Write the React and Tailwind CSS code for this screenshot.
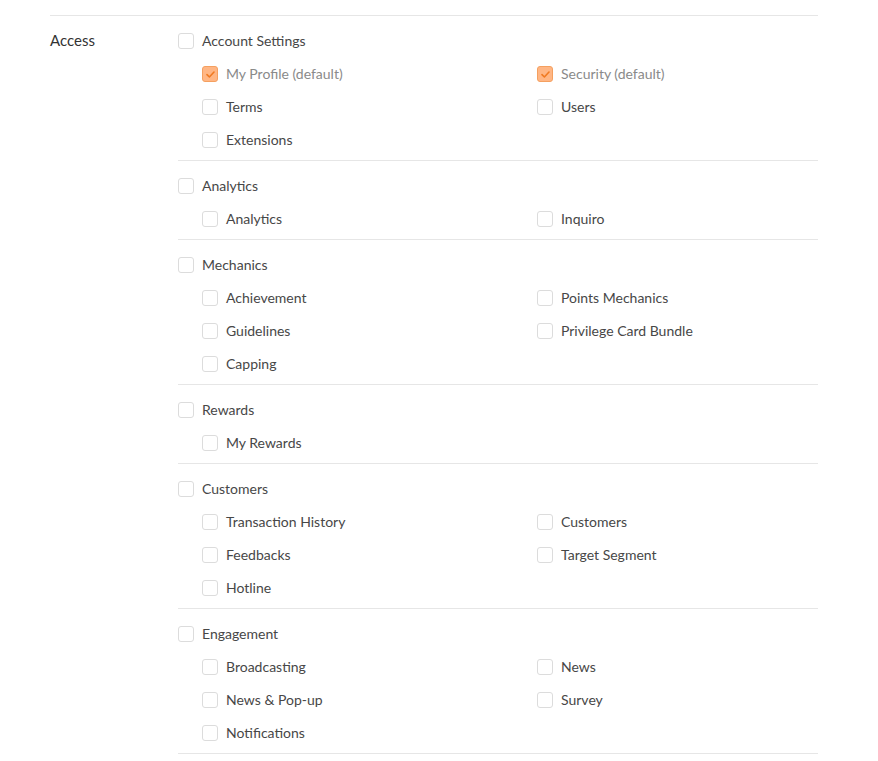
// Access permissions: grouped checkboxes, parent per module + two-column children.
const groups = [
  {
    name: 'Account Settings',
    items: [
      { label: 'My Profile (default)', checked: true },
      { label: 'Security (default)', checked: true },
      { label: 'Terms' },
      { label: 'Users' },
      { label: 'Extensions' },
    ],
  },
  { name: 'Analytics', items: [{ label: 'Analytics' }, { label: 'Inquiro' }] },
  {
    name: 'Mechanics',
    items: [
      { label: 'Achievement' },
      { label: 'Points Mechanics' },
      { label: 'Guidelines' },
      { label: 'Privilege Card Bundle' },
      { label: 'Capping' },
    ],
  },
  { name: 'Rewards', items: [{ label: 'My Rewards' }] },
  {
    name: 'Customers',
    items: [
      { label: 'Transaction History' },
      { label: 'Customers' },
      { label: 'Feedbacks' },
      { label: 'Target Segment' },
      { label: 'Hotline' },
    ],
  },
  {
    name: 'Engagement',
    items: [
      { label: 'Broadcasting' },
      { label: 'News' },
      { label: 'News & Pop-up' },
      { label: 'Survey' },
      { label: 'Notifications' },
    ],
  },
];

const Box = ({ checked }) =>
  checked ? (
    <span className="w-4 h-4 shrink-0 rounded-[3px] border border-[#f5a060] bg-[#ffb684] flex items-center justify-center">
      <svg width="9" height="7" viewBox="0 0 9 7" fill="none">
        <path d="M1 3.6 3.4 6 8 1" stroke="#f07a22" strokeWidth="1.6" strokeLinecap="round" strokeLinejoin="round" />
      </svg>
    </span>
  ) : (
    <span className="w-4 h-4 shrink-0 rounded-[3px] border border-[#dcdcdc] bg-white" />
  );

const Row = ({ label, checked }) => (
  <label className="h-5 flex items-center gap-2">
    <Box checked={checked} />
    <span className={`pb-[2px] ${checked ? 'text-[#8a8a8a]' : 'text-[#474747]'}`}>{label}</span>
  </label>
);

export default function App() {
  return (
    <div className="min-h-screen bg-white pt-[15px] text-[14px]" style={{ fontFamily: 'Lato, "Noto Sans", sans-serif' }}>
      <div className="ml-[50px] w-[768px] border-t border-[#e6e6e6] flex">
        <div className="w-32 pt-[15px] h-[35px] flex items-start text-[15px] text-[#333]">
          <span className="h-5 flex items-center pb-[2px]">Access</span>
        </div>
        <div className="flex-1">
          {groups.map((g) => (
            <div key={g.name} className="border-b border-[#e6e6e6] pt-[15px] pb-[10px] flex flex-col gap-[13px]">
              <Row label={g.name} />
              <div className="pl-6 grid grid-cols-[335px_1fr] gap-y-[13px]">
                {g.items.map((it) => (
                  <Row key={it.label} {...it} />
                ))}
              </div>
            </div>
          ))}
        </div>
      </div>
    </div>
  );
}
